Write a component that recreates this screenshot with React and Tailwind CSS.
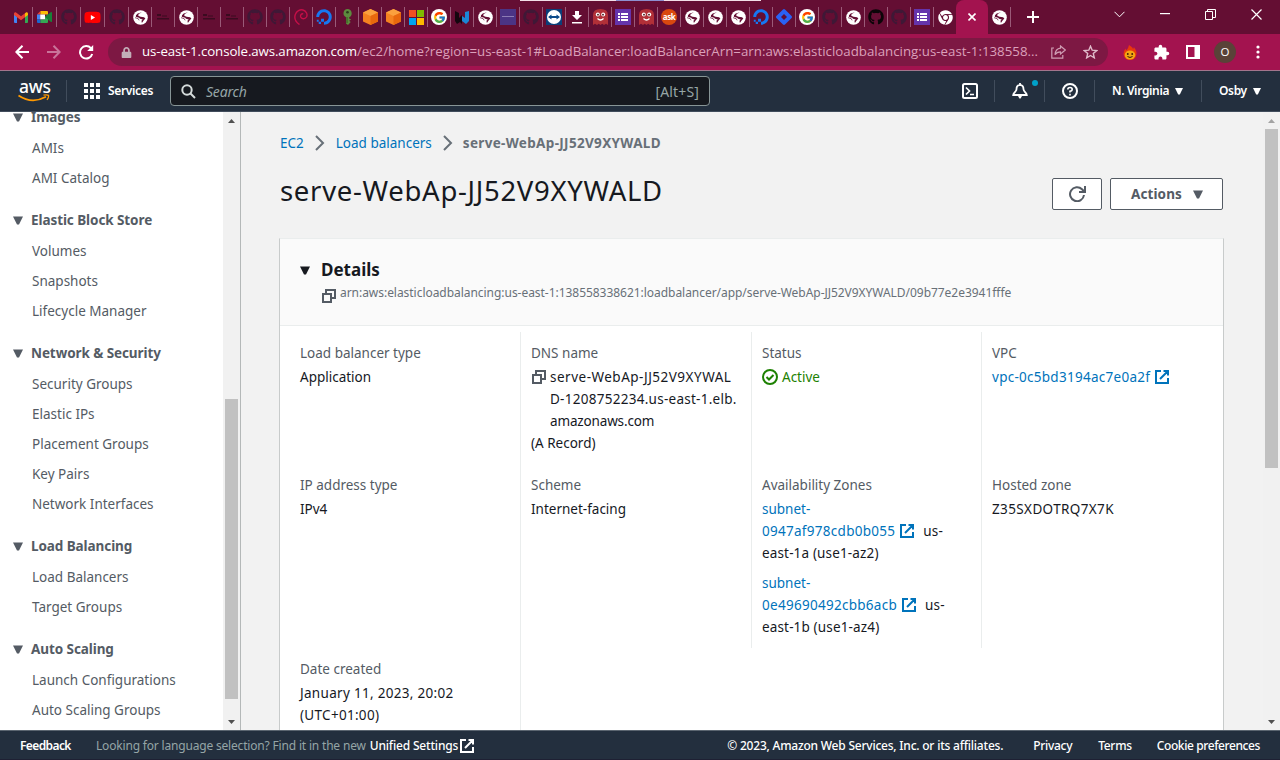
import React from "react";
import { FcGoogle } from "react-icons/fc";
import { FaGithub, FaYoutube, FaChrome, FaDigitalOcean, FaLock } from "react-icons/fa";
import { MdExtension } from "react-icons/md";

const Globe = () => (
  <svg width="15" height="15" viewBox="0 0 16 16">
    <circle cx="8" cy="8" r="7.800" fill="#fff" />
    <path d="M9.500 2.500L6 4.300 5.600 6 8 7.200 11.800 7.600 13.200 9 11.500 11 9.500 13.800 9 11.500 10.400 10 7.500 9.200 6.500 8.200 3 7.200 3.200 5.600 5 3.800z" fill="#640e33" />
    <path d="M2.200 8.200L5.500 9.200 6.500 11" fill="none" stroke="#640e33" strokeWidth=".8" />
  </svg>
);
const Gmail = () => (
  <svg width="14" height="11" viewBox="0 0 14 11">
    <path d="M0 1.500V10q0 1 1 1h2V4.500z" fill="#4285f4" />
    <path d="M14 1.500V10q0 1-1 1h-2V4.500z" fill="#34a853" />
    <path d="M11 1.200L12.300.3Q14-.2 14 1.800V3l-3 2.300z" fill="#fbbc04" />
    <path d="M0 1.800Q0-.2 1.700.3L7 4.300 11 1.200v4L7 8.300 0 3z" fill="#ea4335" />
  </svg>
);
const Meet = () => (
  <svg width="15" height="12" viewBox="0 0 15 12">
    <path d="M0 3.500L3.500 0v3.500z" fill="#ea4335" />
    <path d="M3.500 0H10q1 0 1 1v2.500H3.500z" fill="#fbbc04" />
    <path d="M0 3.500h3.200v5H0z" fill="#4285f4" />
    <path d="M3.200 3.500H8v5H3.200z" fill="#fff" />
    <path d="M0 8.500h3.500V12H1q-1 0-1-1z" fill="#1967d2" />
    <path d="M3.500 8.500H8V6l3-3v8q0 1-1 1H3.500z" fill="#34a853" />
    <path d="M8 6l6-5q1-.4 1 .5v9q0 .900-1 .5z" fill="#188038" />
  </svg>
);
const Octo = () => <FaGithub size={16} color="#3f1836" />;
const OctoBlack = () => <FaGithub size={16} color="#0b0508" />;
const Tube = () => <FaYoutube size={17} color="#ff0000" className="bg-[linear-gradient(#fff,#fff)] bg-[length:6px_6px] bg-center bg-no-repeat" />;
const Faint = () => (
  <svg width="12" height="8" viewBox="0 0 12 8">
    <path d="M0 1h4v2H0zM5 2.500h5v1H5zM0 5h12v1.600H0z" fill="#3a0b20" />
  </svg>
);
const Debian = () => (
  <svg width="14" height="16" viewBox="0 0 14 16" fill="none" stroke="#c50f48" strokeWidth="1.400">
    <path d="M5.500 15.500C1.500 13 .2 9 1.300 5.500 2.500 2 6 .2 9 1c3.500 1 4.800 4.500 3.500 7-1.500 2.400-5 2.200-5.800 0-.6-2 .8-3.600 2.500-3.200" />
  </svg>
);
const Ocean = () => <FaDigitalOcean size={16} color="#1677f2" />;
const Key = () => (
  <svg width="11" height="16" viewBox="0 0 11 16">
    <path d="M5.500 0a4.300 4.300 0 0 1 1.700 8.200v1.300l2 1-2 1.300 1.500 1.200L6 16l-2-1.500V8.200A4.300 4.300 0 0 1 5.500 0z" fill="#5d8a3e" />
    <circle cx="5.500" cy="3.300" r="1.300" fill="#2b3a1c" />
    <path d="M5 8v6" stroke="#37581f" />
  </svg>
);
const Cube = () => (
  <svg width="15" height="16" viewBox="0 0 15 16">
    <path d="M7.500 0L15 3.500v9L7.500 16 0 12.500v-9z" fill="#f58220" />
    <path d="M7.500 0L15 3.500 7.500 7 0 3.500z" fill="#fba13e" />
    <path d="M7.500 7L15 3.500v9L7.500 16z" fill="#e8680d" />
  </svg>
);
const Windows = () => (
  <svg width="15" height="15" viewBox="0 0 15 15">
    <path d="M0 0h7v7H0z" fill="#f25022" /><path d="M8 0h7v7H8z" fill="#7fba00" />
    <path d="M0 8h7v7H0z" fill="#00a4ef" /><path d="M8 8h7v7H8z" fill="#ffb900" />
  </svg>
);
const Google = () => <span className="flex size-4 items-center justify-center rounded-full bg-white"><FcGoogle size={13} /></span>;
const Wave = () => (
  <svg width="14" height="13" viewBox="0 0 14 13">
    <path d="M0 0l4 2v5l3-3v9L5 11l-3 2L0 10z" fill="#14070f" />
    <path d="M7 5l3 2V1l4-1v10l-3 3-4-3z" fill="#1c86d6" />
  </svg>
);
const Purple = () => (
  <svg width="16" height="16" viewBox="0 0 16 16"><path d="M0 0h16v16H0z" fill="#4b3485" /><path d="M2 7.500h12" stroke="#8d7cb5" /></svg>
);
const Viewer = () => (
  <svg width="16" height="16" viewBox="0 0 16 16">
    <path d="M0 0h16v16H0z" fill="#0b3f7a" /><circle cx="8" cy="8" r="7" fill="#fff" />
    <path d="M2 8l3.500-2.600V7h5V5.400L14 8l-3.500 2.600V9h-5v1.600z" fill="#0b4a8a" />
  </svg>
);
const Download = () => (
  <svg width="12" height="13" viewBox="0 0 12 13"><path d="M4 0h4v4h3L6 9 1 4h3zM1 11h10v1.600H1z" fill="#fff" /></svg>
);
const Ghost = () => (
  <svg width="15" height="16" viewBox="0 0 15 16">
    <path d="M0 6Q0 0 7.500 0T15 6v10l-2-1.200L11 16l-1.800-1.200L7.500 16l-1.800-1.200L4 16l-2-1.200L0 16z" fill="#b23038" />
    <circle cx="4.800" cy="5.500" r="2" fill="#fff" /><circle cx="10.200" cy="5.500" r="2" fill="#fff" />
    <circle cx="5" cy="5.700" r=".9" fill="#401015" /><circle cx="10" cy="5.700" r=".9" fill="#401015" />
    <path d="M4.500 9.500q3 3 6 0" stroke="#fff" strokeWidth="1.300" fill="none" />
  </svg>
);
const Form = () => (
  <svg width="16" height="16" viewBox="0 0 16 16">
    <path d="M0 0h16v16H0z" fill="#6534ac" />
    <path d="M3 4h2v2H3zM6 4h7v2H6zM3 7h2v2H3zM6 7h7v2H6zM3 10h2v2H3zM6 10h7v2H6z" fill="#fff" />
  </svg>
);
const Ask = () => (
  <span className="flex size-4 items-center justify-center rounded-full bg-[#d9480f] text-[8px] leading-none font-bold tracking-[-0.5px] text-white">ask</span>
);
const Diamond = () => (
  <svg width="16" height="16" viewBox="0 0 16 16">
    <path d="M8 0q.6 0 1 .4L15.600 7q.8 1 0 2L9 15.600q-1 .8-2 0L.4 9q-.8-1 0-2L7 .4Q7.400 0 8 0z" fill="#2a62f5" />
    <path d="M8 5l3 3-3 3-3-3z" fill="#5d0f3a" />
  </svg>
);
const Chrome = () => <FaChrome size={15} color="#fff" />;

const wideTabs = [Gmail, Meet, Octo, Tube, Octo];
const tabs = [
  Globe, Faint, Globe, Faint, Faint, Octo, Octo, Debian, Ocean, Key, Cube, Cube, Windows, Google, Wave, Globe,
  Purple, Octo, Viewer, Download, Ghost, Form, Ghost, Ask, Globe, Globe, Globe, Ocean, Diamond, Google, Octo,
  Globe, OctoBlack, Octo, Form, Chrome,
];

const Caret = ({ className = "" }) => (
  <svg width="10" height="9" viewBox="0 0 10 9" className={"shrink-0 " + className}><path d="M0 .5h10L6 8.500H4z" fill="currentColor" /></svg>
);
const NavCaret = () => (
  <svg width="8" height="7" viewBox="0 0 8 7" className="shrink-0"><path d="M0 0h8L4.800 6.500H3.200z" fill="currentColor" /></svg>
);
const Copy = ({ className = "" }) => (
  <svg width="14" height="14" viewBox="0 0 14 14" fill="none" stroke="#545b64" strokeWidth="2" className={"shrink-0 " + className}>
    <path d="M1 5h8v8H1z" /><path d="M4 5V1h9v8H9" />
  </svg>
);
const External = ({ className = "" }) => (
  <svg width="14" height="14" viewBox="0 0 14 14" fill="none" stroke="currentColor" strokeWidth="2" className={"shrink-0 " + className}>
    <path d="M6 1H1v12h12V8M8.500 1H13v4.500M13 1L5 9" />
  </svg>
);
const Crumb = () => (
  <svg width="10" height="16" viewBox="0 0 10 16" fill="none" stroke="#687078" strokeWidth="2"><path d="M1 1l7 7-7 7" /></svg>
);
const ScrollArrow = ({ down, className = "" }) => (
  <svg width="7" height="4" viewBox="0 0 7 4" className={className}><path d={down ? "M0 0h7L3.500 4z" : "M0 4h7L3.500 0z"} fill="currentColor" /></svg>
);

function TabStrip() {
  return (
    <div className="relative flex h-[34px] bg-[#640e33]">
      <div className="absolute top-0 left-[520px] flex h-px">
        <div className="w-24 bg-[#f3dfe8]" /><div className="w-12 bg-[#8e8fd0]" /><div className="w-[97px] bg-[#f3dfe8]" />
      </div>
      <div className="flex pl-[9px]">
        {wideTabs.map((Icon, i) => (
          <div key={i} className="flex h-[34px] w-6 items-center">
            <div className="flex w-[23px] justify-center">{<Icon />}</div>
            <div className="h-5 w-px bg-[#9a5a78]" />
          </div>
        ))}
        {tabs.map((Icon, i) => (
          <div key={i} className="flex h-[34px] w-[23px] items-center">
            <div className="flex w-[22px] justify-center">{<Icon />}</div>
            <div className={i === tabs.length - 1 ? "h-5 w-px" : "h-5 w-px bg-[#9a5a78]"} />
          </div>
        ))}
      </div>
      <div className="-ml-px flex h-[34px] w-8 items-center justify-center rounded-t-lg bg-[#a3134f]">
        <svg width="8" height="8" viewBox="0 0 8 8" stroke="#fff" strokeWidth="1.600"><path d="M.5.5l7 7M7.500.5l-7 7" /></svg>
      </div>
      <div className="flex w-[23px] items-center">
        <div className="flex w-[22px] justify-center"><Globe /></div>
        <div className="h-5 w-px bg-[#9a5a78]" />
      </div>
      <div className="ml-4 flex items-center">
        <svg width="12" height="12" viewBox="0 0 12 12" stroke="#fff" strokeWidth="2"><path d="M6 0v12M0 6h12" /></svg>
      </div>
      <div className="ml-auto flex h-7 items-center gap-[35px] pr-[18px]">
        <svg width="11" height="7" viewBox="0 0 11 7" fill="none" stroke="#fff"><path d="M.5.8l5 5 5-5" /></svg>
        <svg width="10" height="2" viewBox="0 0 10 2"><path d="M0 0h10v1.200H0z" fill="#fff" /></svg>
        <svg width="11" height="11" viewBox="0 0 11 11" fill="none" stroke="#fff"><path d="M.5 2.500h7v8h-7zM2.500 2V.5h8v8H8" /></svg>
        <svg width="11" height="11" viewBox="0 0 11 11" stroke="#fff" strokeWidth="1.200"><path d="M.5.5l10 10M10.500.5l-10 10" /></svg>
      </div>
    </div>
  );
}

function Toolbar() {
  return (
    <div className="flex h-9 items-center bg-[#a3134f] font-['Open_Sans','Noto_Sans',sans-serif]">
      <div className="flex w-[108px] items-center gap-[18px] pl-[15px]">
        <svg width="14" height="14" viewBox="0 0 14 14" fill="none" stroke="#fff" strokeWidth="2"><path d="M14 7H1.500M7.500.800L1.400 7l6.100 6.200" /></svg>
        <svg width="14" height="14" viewBox="0 0 14 14" fill="none" stroke="#c9749a" strokeWidth="2"><path d="M0 7h12.500M6.500.800L12.600 7l-6.100 6.200" /></svg>
        <svg width="15" height="15" viewBox="0 0 15 15" fill="none" stroke="#fff" strokeWidth="2"><path d="M13.200 9A6.200 6.200 0 1 1 11.900 3.200L13.500 4.800" /><path d="M14.200 0v6H8.200z" fill="#fff" stroke="none" /></svg>
      </div>
      <div className="flex h-7 w-[1000px] items-center rounded-full bg-[#7d1843] pl-[13px]">
        <FaLock size={11} color="#c3aeb8" />
        <div className="ml-[10px] w-[900px] whitespace-nowrap text-[13.3px] text-[#dba0ba]">
          <span className="tracking-[-0.11px] text-white">us-east-1.console.aws.amazon.com</span>/ec2/home?region=us-east-1#LoadBalancer:loadBalancerArn=arn:aws:elasticloadbalancing:us-east-1:138558...
        </div>
        <svg className="ml-[9px] shrink-0" width="15" height="14" viewBox="0 0 15 14" fill="none" stroke="#cf9db3" strokeWidth="1.200">
          <path d="M3 3H.8v10.200h11V10" /><path d="M9.500 1l4.800 4-4.800 4V6.800C6.500 6.800 5 8 4 9.800 4.300 6 6 3.600 9.500 3.200z" />
        </svg>
        <svg className="ml-[17px] shrink-0" width="15" height="14" viewBox="0 0 15 14" fill="none" stroke="#e0bccb" strokeWidth="1.400">
          <path d="M7.500 1.200l1.700 4 4.500.4-3.400 2.900 1 4.300-3.800-2.300-3.800 2.300 1-4.300L1.300 5.600l4.500-.4z" />
        </svg>
      </div>
      <div className="flex items-center pl-[15px]">
        <svg width="14" height="15" viewBox="0 0 14 15">
          <path d="M6 0q4 2.500 4 4 1-1 .8-2Q14 6 13.500 9q-.8 6-6.500 6T.5 9Q.500 6 2.500 3.500q.3 1.500 1 1.800Q5.500 3 6 0z" fill="#e8380d" />
          <ellipse cx="7" cy="10" rx="5.300" ry="4.600" fill="#f2a513" />
          <circle cx="4.800" cy="9" r=".9" fill="#3a1a05" /><circle cx="9.200" cy="9" r=".9" fill="#3a1a05" />
          <path d="M4.500 11.500q2.500 2 5 0" stroke="#3a1a05" fill="none" />
        </svg>
        <MdExtension size={17} color="#fff" className="ml-4" />
        <svg className="ml-4" width="14" height="14" viewBox="0 0 14 14"><path d="M1 1h12v12H1z" fill="none" stroke="#fff" strokeWidth="2" /><path d="M8.500 1H13v12H8.500z" fill="#fff" /></svg>
        <div className="ml-[14px] flex size-[22px] items-center justify-center rounded-full bg-[#5a4238] text-[11.5px] text-white">O</div>
        <svg className="ml-5" width="4" height="14" viewBox="0 0 4 14" fill="#fff"><circle cx="2" cy="2" r="1.600" /><circle cx="2" cy="7" r="1.600" /><circle cx="2" cy="12" r="1.600" /></svg>
      </div>
    </div>
  );
}

function Nav() {
  return (
    <div className="flex h-[42px] items-center border-t border-b border-t-[#a3758d] border-b-[#414d5c] bg-[#232f3e] text-[12px] font-semibold tracking-[-0.35px] text-white">
      <div className="ml-[18px] flex w-8 flex-col">
        <span className="h-[13px] pl-px text-[17.5px] leading-[10px] font-medium tracking-[-0.3px]">aws</span>
        <svg width="32" height="8" viewBox="0 0 32 8" fill="none" stroke="#f90" strokeWidth="1.700"><path d="M.5 1.500Q14 10.500 28 2.800" /><path d="M25.500 1.200q3.500-.8 5 .2.500 2-1.500 4.500" strokeWidth="1.300" /></svg>
      </div>
      <div className="ml-4 h-[22px] w-px bg-[#414d5c]" />
      <svg className="ml-[17px]" width="16" height="16" viewBox="0 0 16 16" fill="#fff">
        <path d="M0 0h4v4H0zM6 0h4v4H6zM12 0h4v4h-4zM0 6h4v4H0zM6 6h4v4H6zM12 6h4v4h-4zM0 12h4v4H0zM6 12h4v4H6zM12 12h4v4h-4z" />
      </svg>
      <span className="ml-2 w-[62px]">Services</span>
      <div className="flex h-[30px] w-[540px] items-center rounded-sm border border-[#879596] bg-[#16191f] px-[10px] text-[14px] font-normal tracking-normal text-[#95a5a6]">
        <svg width="15" height="15" viewBox="0 0 15 15" fill="none" stroke="#d5dbdb" strokeWidth="2"><circle cx="6" cy="6" r="4.700" /><path d="M9.500 9.500l4.500 4.500" /></svg>
        <span className="ml-[10px] tracking-[-0.2px] italic">Search</span>
        <span className="ml-auto tracking-[0.15px]">[Alt+S]</span>
      </div>
      <svg className="ml-[252px]" width="16" height="16" viewBox="0 0 16 16" fill="none" stroke="#fff" strokeWidth="2"><rect x="1" y="1" width="14" height="14" rx="1.500" /><path d="M4 4.500L7.500 8 4 11.500M8 11.500h4" strokeWidth="1.700" /></svg>
      <div className="ml-4 h-[22px] w-px bg-[#414d5c]" />
      <div className="relative ml-[17px]">
        <svg width="16" height="16" viewBox="0 0 16 16" fill="none" stroke="#fff" strokeWidth="1.800">
          <path d="M8 0v2M8 1.900C5.600 2 4.500 4 4.500 6.200 4.500 8.500 1.400 9.500 1.200 12h13.600C14.600 9.500 11.500 8.500 11.500 6.200 11.500 4 10.400 2 8 1.900z" />
          <path d="M5.700 12.600h4.600L8.600 15.500H7.400z" fill="#fff" stroke="none" />
        </svg>
        <span className="absolute -top-[3px] left-5 size-[6px] rounded-full bg-[#00a1c9]" />
      </div>
      <div className="ml-4 h-[22px] w-px bg-[#414d5c]" />
      <svg className="ml-[17px]" width="16" height="16" viewBox="0 0 16 16" fill="none" stroke="#fff" strokeWidth="2"><circle cx="8" cy="8" r="7" /><path d="M5.800 6.500Q5.800 4.500 8 4.500t2.200 1.800Q10.200 8 8 8.300v1.200M8 10.800v1.600" strokeWidth="1.600" /></svg>
      <div className="ml-4 h-[22px] w-px bg-[#414d5c]" />
      <span className="ml-[17px] w-[63px] shrink-0 whitespace-nowrap">N. Virginia</span>
      <NavCaret />
      <div className="ml-[18px] h-[22px] w-px bg-[#414d5c]" />
      <span className="ml-[17px] w-[34px] shrink-0">Osby</span>
      <NavCaret />
    </div>
  );
}

const groups = [
  ["Images", ["AMIs", "AMI Catalog"]],
  ["Elastic Block Store", ["Volumes", "Snapshots", "Lifecycle Manager"]],
  ["Network & Security", ["Security Groups", "Elastic IPs", "Placement Groups", "Key Pairs", "Network Interfaces"]],
  ["Load Balancing", ["Load Balancers", "Target Groups"]],
  ["Auto Scaling", ["Launch Configurations", "Auto Scaling Groups"]],
];

function Sidebar() {
  return (
    <div className="flex w-[241px] shrink-0 overflow-hidden border-r border-[#b4b8b8] bg-white text-[#545b64]">
      <div className="-mt-[10px] w-[223px] shrink-0 text-[13.5px]">
        {groups.map(([title, items]) => (
          <div key={title} className="mb-3">
            <div className="mb-px flex h-[30px] items-center pl-[13px] font-bold tracking-[-0.08px]">
              <Caret /><span className="ml-2">{title}</span>
            </div>
            {items.map((item) => <div key={item} className="flex h-[30px] items-center pl-8">{item}</div>)}
          </div>
        ))}
      </div>
      <div className="flex h-[618px] w-[17px] flex-col items-center bg-[#f1f1f1]">
        <ScrollArrow className="mt-[7px] text-[#505050]" />
        <div className="mt-[276px] h-[300px] w-[13px] bg-[#c1c1c1]" />
        <ScrollArrow down className="mt-[21px] text-[#505050]" />
      </div>
    </div>
  );
}

function Cell({ label, divider, children }) {
  return (
    <div className={"pt-[10px] pl-[10px] whitespace-nowrap leading-[22px] " + (divider ? "border-r border-[#eaeded]" : "")}>
      <div className="mb-0.5 text-[#545b64]">{label}</div>
      {children}
    </div>
  );
}

function Zone({ id, head, tail }) {
  return (
    <div className="mb-2 tracking-[0.15px]">
      <div className="tracking-normal text-[#0073bb]">subnet-</div>
      <div className="flex items-center"><span className="tracking-[0.28px] text-[#0073bb]">{id}</span><External className="ml-[5px] text-[#0073bb]" /><span className="ml-[9px]">{head}</span></div>
      <div>{tail}</div>
    </div>
  );
}

function Main() {
  return (
    <div className="flex min-w-0 grow bg-[#f2f2f2] text-[#16191f]">
      <div className="w-[1022px] shrink-0 overflow-hidden pl-[38px]">
        <div className="mt-5 flex h-[22px] items-center pl-px text-[13.5px] text-[#0073bb]">
          <span>EC2</span><span className="mr-[11px] ml-[11px]"><Crumb /></span><span>Load balancers</span><span className="mr-[10px] ml-[11px]"><Crumb /></span>
          <span className="font-bold tracking-[0.33px] text-[#687078]">serve-WebAp-JJ52V9XYWALD</span>
        </div>
        <div className="mt-6 flex h-8 w-[944px] items-center pl-px">
          <h1 className="relative -top-[3px] text-[27.5px] leading-8 tracking-[0.7px]">serve-WebAp-JJ52V9XYWALD</h1>
          <div className="ml-auto flex h-8 w-[50px] items-center justify-center rounded-xs border border-[#545b64] bg-white">
            <svg width="17" height="16" viewBox="0 0 17 16" fill="none" stroke="#545b64" strokeWidth="2"><path d="M15 9A7 7 0 1 1 13 3.200L15 5.200" /><path d="M16 0v6h-6" /></svg>
          </div>
          <div className="ml-2 flex h-8 w-[113px] items-center rounded-xs border border-[#545b64] bg-white pl-5 text-[13.5px] font-bold text-[#545b64]">
            <span className="w-[62px] tracking-[0.1px]">Actions</span><Caret />
          </div>
        </div>
        <div className="mt-7 h-[520px] w-[945px] border border-x-[#c8cbcb] border-t-[#eaeded] bg-white">
          <div className="h-[87px] border-b border-[#eaeded] bg-[#fafafa] pt-5 pl-5">
            <div className="flex h-[22px] items-center"><Caret /><span className="ml-[11px] text-[17px] font-bold">Details</span></div>
            <div className="flex h-[22px] items-center pl-[22px] text-[#687078]"><Copy className="mt-2" /><span className="mt-0.5 ml-1 text-[12px] tracking-[-0.04px]">arn:aws:elasticloadbalancing:us-east-1:138558338621:loadbalancer/app/serve-WebAp-JJ52V9XYWALD/09b77e2e3941fffe</span></div>
          </div>
          <div className="mt-[6px] ml-[10px] grid grid-cols-[231px_231px_230px_231px] grid-rows-[132px_184px_110px] text-[13.5px]">
            <Cell label="Load balancer type" divider>Application</Cell>
            <Cell label="DNS name" divider>
              <div className="flex">
                <Copy className="mt-1 mr-1 ml-px" />
                <div>
                  <div className="tracking-[0.5px]">serve-WebAp-JJ52V9XYWAL</div>
                  <div className="tracking-[0.27px]">D-1208752234.us-east-1.elb.</div>
                  <div className="tracking-[-0.15px]">amazonaws.com</div>
                </div>
              </div>
              <div>(A Record)</div>
            </Cell>
            <Cell label="Status" divider>
              <div className="flex items-center text-[#1d8102]">
                <svg width="16" height="16" viewBox="0 0 16 16" fill="none" stroke="currentColor" strokeWidth="2"><circle cx="8" cy="8" r="7" /><path d="M4.500 8l2.500 2.500 4.500-4.500" /></svg>
                <span className="ml-1">Active</span>
              </div>
            </Cell>
            <Cell label="VPC">
              <div className="flex items-center text-[#0073bb]"><span className="tracking-[0.27px]">vpc-0c5bd3194ac7e0a2f</span><External className="ml-[5px]" /></div>
            </Cell>
            <Cell label="IP address type" divider>IPv4</Cell>
            <Cell label="Scheme" divider>Internet-facing</Cell>
            <Cell label="Availability Zones" divider>
              <Zone id="0947af978cdb0b055" head="us-" tail="east-1a (use1-az2)" />
              <Zone id="0e49690492cbb6acb" head="us-" tail="east-1b (use1-az4)" />
            </Cell>
            <Cell label="Hosted zone"><span className="tracking-[0.38px]">Z35SXDOTRQ7X7K</span></Cell>
            <Cell label="Date created" divider><div className="tracking-[0.3px]">January 11, 2023, 20:02<br />(UTC+01:00)</div></Cell>
          </div>
        </div>
      </div>
      <div className="flex h-[618px] w-[17px] flex-col items-center bg-[#f1f1f1]">
        <ScrollArrow className="mt-[7px] text-[#a3a3a3]" />
        <div className="mt-[6px] h-[339px] w-[13px] bg-[#c1c1c1]" />
        <ScrollArrow down className="mt-[252px] text-[#505050]" />
      </div>
    </div>
  );
}

function Footer() {
  return (
    <div className="flex h-[30px] items-center border-t border-[#5b6570] bg-[#232f3e] px-5 pt-px text-[12px] font-medium tracking-[-0.22px] whitespace-nowrap text-white shadow-[inset_0_-1px_0_#1e2033]">
      <span className="w-[76px] font-semibold tracking-[-0.6px]">Feedback</span>
      <span className="mr-1 font-normal tracking-[-0.18px] text-[#95a5a6]">Looking for language selection? Find it in the new</span>
      <span className="tracking-[-0.18px]">Unified Settings</span>
      <External className="ml-0.5" />
      <span className="ml-auto">© 2023, Amazon Web Services, Inc. or its affiliates.</span>
      <span className="ml-[30px] tracking-[-0.3px]">Privacy</span>
      <span className="ml-[26px] tracking-[-0.3px]">Terms</span>
      <span className="ml-[25px] tracking-[-0.4px]">Cookie preferences</span>
    </div>
  );
}

export default function App() {
  return (
    <div className="flex h-[760px] w-[1280px] flex-col overflow-hidden font-['Noto_Sans',sans-serif]">
      <TabStrip />
      <Toolbar />
      <Nav />
      <div className="flex h-[618px] overflow-hidden">
        <Sidebar />
        <Main />
      </div>
      <Footer />
    </div>
  );
}
